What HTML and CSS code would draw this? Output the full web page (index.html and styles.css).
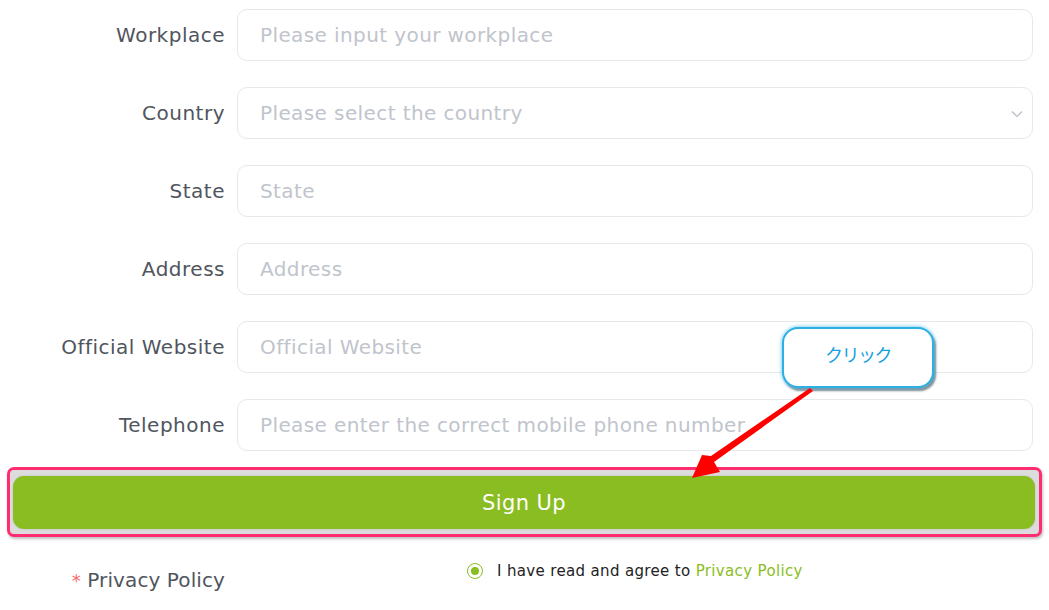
FILE: index.html
```html
<!DOCTYPE html>
<html lang="en">
<head>
<meta charset="utf-8">
<link rel="stylesheet" href="styles.css">
</head>
<body>
<div class="form">
  <div class="row"><label class="lbl">Workplace</label><div class="field"><span class="ph">Please input your workplace</span></div></div>
  <div class="row"><label class="lbl">Country</label><div class="field select"><span class="ph">Please select the country</span>
    <svg class="chev" width="12" height="8" viewBox="0 0 12 8"><path d="M1 1.5 L6 6.5 L11 1.5" fill="none" stroke="#b8bcc4" stroke-width="1.2"/></svg></div></div>
  <div class="row"><label class="lbl">State</label><div class="field"><span class="ph">State</span></div></div>
  <div class="row"><label class="lbl">Address</label><div class="field"><span class="ph">Address</span></div></div>
  <div class="row"><label class="lbl">Official Website</label><div class="field"><span class="ph">Official Website</span></div></div>
  <div class="row"><label class="lbl">Telephone</label><div class="field"><span class="ph">Please enter the correct mobile phone number</span></div></div>
  <div class="btnwrap">
    <div class="btn">Sign Up</div>
  </div>
  <div class="row privacy"><label class="lbl"><span class="req">*</span> Privacy Policy</label>
    <div class="agree"><span class="radio"></span><span>I have read and agree to <span class="link">Privacy Policy</span></span></div>
  </div>
</div>
<div class="callout">クリック</div>
<svg class="arrow" width="1049" height="610" viewBox="0 0 1049 610">
  <polygon points="813,391 810,388 711,456 702,455 692,478 720,472 714,462" fill="#ff0000"/>
</svg>
</body>
</html>
```
FILE: styles.css
```css
html, body { margin: 0; padding: 0; background: #fff; }
body {
  width: 1049px; height: 610px; overflow: hidden; position: relative;
  font-family: "DejaVu Sans", "Noto Sans", sans-serif;
}
.form { padding: 9px 16px 0 0; display: flex; flex-direction: column; gap: 26px; }
.row { display: grid; grid-template-columns: 225px 1fr; column-gap: 12px; align-items: center; }
.lbl { text-align: right; font-size: 20px; color: #50555e; letter-spacing: 0.5px; white-space: nowrap; }
.field {
  height: 50px; border: 1px solid #e6e8ed; border-radius: 10px;
  display: flex; align-items: center; padding: 0 22px; position: relative;
}
.ph { font-size: 20px; color: #c0c4cc; letter-spacing: 0.4px; }
.chev { position: absolute; right: 9px; top: 22px; }
.btnwrap {
  margin: -10px -9px 0 7px;
  border: 3px solid #ff2d6f; border-radius: 7px;
  padding: 6px 4px 5px 3px;
  background: #dcdcdc;
  box-shadow: 1px 2px 3px rgba(0,0,0,0.25);
}
.btn {
  height: 53px; background: #8abd21; border-radius: 11px;
  color: #fff; font-size: 21px; letter-spacing: 0.4px; display: flex; align-items: center; justify-content: center;
  box-shadow: 0 0 2px rgba(0,0,0,0.15);
}
.privacy { margin-top: -1px; align-items: start; }
.lbl .req { color: #f56c6c; font-size: 18px; }
.privacy .lbl { padding-top: 6px; letter-spacing: 0.1px; }
.agree { display: flex; align-items: center; gap: 14px; padding-left: 230px; font-size: 15px; color: #222; letter-spacing: 0.35px; }
.radio {
  width: 14px; height: 14px; border: 1px solid #8abd21; border-radius: 50%;
  display: inline-flex; align-items: center; justify-content: center; box-sizing: content-box;
}
.radio::after { content: ""; width: 8px; height: 8px; border-radius: 50%; background: #8abd21; }
.link { color: #8abd21; }
.callout {
  position: absolute; left: 782px; top: 327px; width: 152px; height: 61px;
  background: #fff; border: 2px solid #2fb0e4; border-radius: 16px;
  box-shadow: 0 0 4px #4cc0ee, 2px 3px 2px rgba(60,60,60,0.6);
  color: #1a9fe0; font-size: 18px; letter-spacing: -1.5px; text-align: center; line-height: 50px;
  font-family: "Noto Sans CJK JP", sans-serif; box-sizing: border-box;
}
.arrow { position: absolute; left: 0; top: 0; pointer-events: none; }
```
